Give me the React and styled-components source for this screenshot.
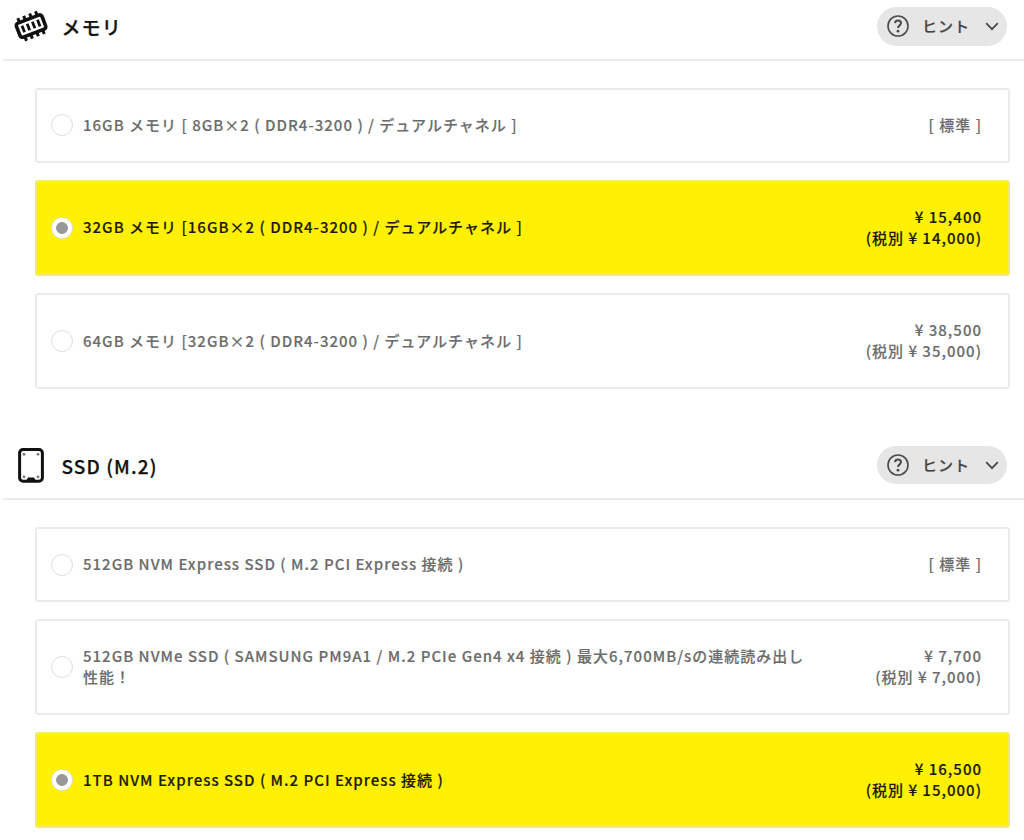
import React, { useState } from 'react';
import styled, { createGlobalStyle } from 'styled-components';

const GlobalStyle = createGlobalStyle`
  * {
    box-sizing: border-box;
  }

  body {
    margin: 0;
    background: #fff;
    color: #111;
    font-family: "Noto Sans CJK JP", "Noto Sans", sans-serif;
    font-weight: 500;
  }
`;

const Page = styled.main`
  width: 1024px;
  height: 840px;
  overflow: hidden;
`;

const Section = styled.section`
  margin-bottom: 49px;
`;

const Header = styled.header`
  display: flex;
  align-items: center;
  height: ${({ $first }) => ($first ? '61px' : '62px')};
  margin-left: 3px;
  padding: 0 17.5px ${({ $first }) => ($first ? '7px' : '6px')} 11px;
  border-bottom: 2px solid #ebebeb;
`;

const IconBox = styled.span`
  display: flex;
  width: 34px;
  height: 40px;
  align-items: center;
  justify-content: center;
`;

const Title = styled.h2`
  flex: 1;
  margin: 0 0 0 13.5px;
  padding-top: 2px;
  font-size: 19px;
  font-weight: 500;
  line-height: 28px;
  letter-spacing: 1.1px;
  -webkit-text-stroke: 0.25px;
`;

const HintButton = styled.button`
  display: flex;
  align-items: center;
  width: 130px;
  height: ${({ $first }) => ($first ? '39px' : '38px')};
  padding: 0 7px 0 10px;
  border: 0;
  border-radius: 20px;
  background: #e6e6e6;
  color: #444;
  font: inherit;
  font-size: 15px;
  cursor: pointer;
`;

const HintLabel = styled.span`
  flex: 1;
  margin-left: 13.5px;
  padding-bottom: 2px;
  text-align: left;
  letter-spacing: 1px;
  -webkit-text-stroke: 0.2px;
`;

const Options = styled.div`
  display: flex;
  flex-direction: column;
  gap: 17px;
  padding: 27px 14px 0 34.5px;
`;

const Option = styled.label`
  display: flex;
  align-items: center;
  height: ${({ $height }) => $height}px;
  padding: 0 27px 0 15.5px;
  border: 2px solid ${({ $checked }) => ($checked ? '#f3ea6b' : '#ebebeb')};
  border-radius: 3px;
  background: ${({ $checked }) => ($checked ? '#fff004' : '#fff')};
  color: ${({ $checked }) => ($checked ? '#1c1a00' : '#6c6c6c')};
  font-size: 15px;
  line-height: 21px;
  letter-spacing: 1.01px;
  -webkit-text-stroke: 0.15px;
  cursor: pointer;
`;

const Radio = styled.input`
  appearance: none;
  flex: none;
  width: 22px;
  height: 22px;
  margin: 0 10px 0 -1px;
  border: 1.5px solid #dedede;
  border-radius: 50%;
  background: #fff;

  &:checked {
    background: radial-gradient(circle, #999 5.5px, #fff 6.3px);
  }
`;

const Name = styled.span`
  width: 735px;
  padding-bottom: 2px;
`;

const Price = styled.span`
  flex: 1;
  padding-bottom: 2px;
  margin-right: -1px;
  text-align: right;
  white-space: nowrap;
`;

const MemoryIcon = () => (
  <svg width="34" height="34" viewBox="0 0 34 34" fill="none" stroke="#111">
    <g transform="rotate(-21 17 17)">
      <rect x="3.3" y="9.6" width="27.4" height="15" rx="2.5" strokeWidth="3.6" />
      <path d="M7.5 9V4.9M13.8 9V4.9M20.2 9V4.9M26.5 9V4.9M7.5 25v4.3M13.8 25v4.3M20.2 25v4.3M26.5 25v4.3" strokeWidth="3" />
      <path d="M8.7 13.6v7M14.2 13.6v7M19.8 13.6v7M25.3 13.6v7" strokeWidth="2.8" />
    </g>
  </svg>
);

const SsdIcon = () => (
  <svg width="26" height="35" viewBox="0 0 26 35" fill="none">
    <rect x="1.6" y="1.6" width="22.8" height="31.6" rx="3.5" stroke="#111" strokeWidth="3" />
    <path d="M8 33l2-3.5h6l2 3.5z" fill="#111" />
    <g fill="#777">
      <circle cx="6" cy="6.3" r="1.4" />
      <circle cx="20" cy="6.3" r="1.4" />
      <circle cx="6" cy="28.8" r="1.4" />
      <circle cx="20" cy="28.8" r="1.4" />
    </g>
  </svg>
);

const HelpIcon = () => (
  <svg width="22" height="22" viewBox="0 0 22 22" fill="none" stroke="#4a4a4a">
    <circle cx="11" cy="11" r="10" strokeWidth="1.6" />
    <path d="M8 8.2c.2-1.7 1.3-2.6 3-2.6 1.8 0 3 1 3 2.5 0 2.2-3 2.4-3 4.9" strokeWidth="2" />
    <circle cx="11" cy="16.2" r="1.4" fill="#4a4a4a" stroke="none" />
  </svg>
);

const ChevronIcon = () => (
  <svg width="16" height="16" viewBox="0 0 16 16" fill="none" stroke="#4a4a4a" strokeWidth="1.8">
    <path d="M2.2 5.2l5.8 6 5.8-6" />
  </svg>
);

const sections = [
  {
    id: 'memory',
    title: 'メモリ',
    icon: MemoryIcon,
    selected: 1,
    options: [
      { name: '16GB メモリ [ 8GB×2 ( DDR4-3200 ) / デュアルチャネル ]', height: 74.5 },
      { name: '32GB メモリ [16GB×2 ( DDR4-3200 ) / デュアルチャネル ]', price: '15,400', net: '14,000', height: 96.5 },
      { name: '64GB メモリ [32GB×2 ( DDR4-3200 ) / デュアルチャネル ]', price: '38,500', net: '35,000', height: 96 },
    ],
  },
  {
    id: 'ssd',
    title: 'SSD (M.2)',
    icon: SsdIcon,
    selected: 2,
    options: [
      { name: '512GB NVM Express SSD ( M.2 PCI Express 接続 )', height: 75 },
      { name: '512GB NVMe SSD ( SAMSUNG PM9A1 / M.2 PCIe Gen4 x4 接続 ) 最大6,700MB/sの連続読み出し性能！', price: '7,700', net: '7,000', height: 96 },
      { name: '1TB NVM Express SSD ( M.2 PCI Express 接続 )', price: '16,500', net: '15,000', height: 96 },
    ],
  },
];

const PartSection = ({ part, first }) => {
  const [selected, setSelected] = useState(part.selected);
  const Icon = part.icon;

  return (
    <Section>
      <Header $first={first}>
        <IconBox><Icon /></IconBox>
        <Title>{part.title}</Title>
        <HintButton type="button" $first={first}>
          <HelpIcon />
          <HintLabel>ヒント</HintLabel>
          <ChevronIcon />
        </HintButton>
      </Header>
      <Options>
        {part.options.map((option, i) => (
          <Option key={option.name} $height={option.height} $checked={selected === i}>
            <Radio type="radio" name={part.id} checked={selected === i} onChange={() => setSelected(i)} />
            <Name>{option.name}</Name>
            <Price>
              {option.price ? (
                <>¥ {option.price}<br />(税別 ¥ {option.net})</>
              ) : '[ 標準 ]'}
            </Price>
          </Option>
        ))}
      </Options>
    </Section>
  );
};

const App = () => (
  <>
    <GlobalStyle />
    <Page>
      {sections.map((part, i) => (
        <PartSection key={part.id} part={part} first={i === 0} />
      ))}
    </Page>
  </>
);

export default App;
